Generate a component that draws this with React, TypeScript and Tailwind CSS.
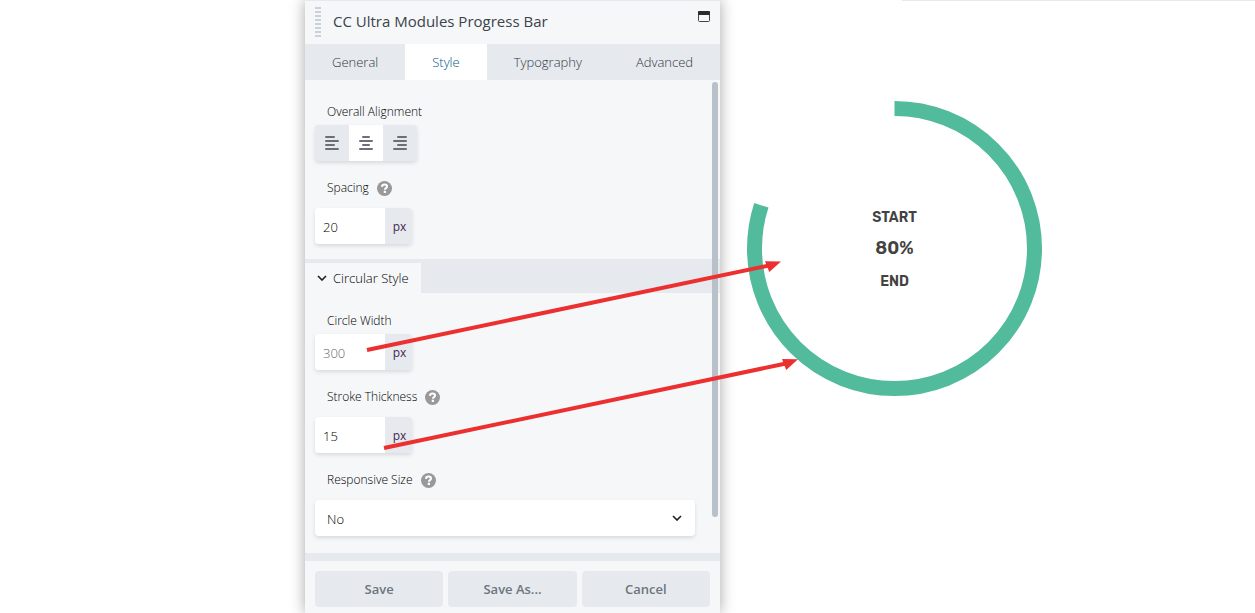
import { useState } from "react";
import type { ReactNode } from "react";
import clsx from "clsx";

const tabs = ["General", "Style", "Typography", "Advanced"];

const alignments = [
  { value: "left", path: "M1 1h8M1 5h12M1 9h8M1 13h12" },
  { value: "center", path: "M4 1h6M1 5h12M4 9h6M1 13h12" },
  { value: "right", path: "M5 1h8M1 5h12M5 9h8M1 13h12" },
];

const actions = ["Save", "Save As...", "Cancel"];

function HelpIcon() {
  return (
    <svg className="w-[15px] h-[15px]" viewBox="0 0 16 16" aria-hidden="true">
      <circle cx="8" cy="8" r="8" fill="#999999" />
      <path
        d="M5.3 6.3C5.4 4.6 6.5 3.8 8.1 3.8c1.5 0 2.6.8 2.6 2.1 0 1.7-2.3 1.7-2.3 3.4"
        fill="none"
        stroke="#ffffff"
        strokeWidth="2.2"
      />
      <rect x="7.2" y="10.4" width="2.4" height="2.4" fill="#ffffff" />
    </svg>
  );
}

function Chevron({ className }: { className?: string }) {
  return (
    <svg className={className} width="10" height="6" viewBox="0 0 10 6" aria-hidden="true">
      <path d="M1 1l4 4 4-4" fill="none" stroke="#1d1d1d" strokeWidth="1.6" />
    </svg>
  );
}

function FieldLabel({ htmlFor, help, children }: { htmlFor: string; help?: boolean; children: ReactNode }) {
  return (
    <div className={clsx("flex items-center gap-2 pl-3", help ? "h-5 mb-2.5" : "h-[18px] mb-1")}>
      <label htmlFor={htmlFor} className="text-[12px] font-light text-black">
        {children}
      </label>
      {help && (
        <button type="button" aria-label="Help">
          <HelpIcon />
        </button>
      )}
    </div>
  );
}

function UnitInput({ id, value, placeholder }: { id: string; value?: string; placeholder?: string }) {
  return (
    <div className="flex w-[97px] h-9 rounded overflow-hidden shadow-[0_2px_4px_rgba(0,0,0,0.12)]">
      <input
        id={id}
        type="text"
        defaultValue={value}
        placeholder={placeholder}
        className="min-w-0 flex-1 bg-white px-2 pt-1 text-[13px] font-light text-black placeholder:text-[#666666] outline-none"
      />
      <span className="w-[27px] pt-0.5 pl-0.5 bg-[#e6eaef] flex items-center justify-center text-[12px] text-[#42264f]">px</span>
    </div>
  );
}

function SettingsPanel() {
  const [tab, setTab] = useState("Style");
  const [align, setAlign] = useState("center");

  return (
    <section className="relative flex flex-col min-h-screen bg-[#f5f7f9] border-t border-[#e6eaef] shadow-[0_0_14px_rgba(0,0,0,0.35)]">
      {/* Title bar */}
      <header className="h-[43px] flex items-center pl-2.5 pr-2.5 pb-0.5">
        <div className="w-1.5 h-[30px] bg-[repeating-linear-gradient(to_bottom,#cbd1d8_0,#cbd1d8_2px,transparent_2px,transparent_4px)]" />
        <h1 className="flex-1 ml-3 text-[15px] text-[#3c434a]">CC Ultra Modules Progress Bar</h1>
        <button type="button" aria-label="Toggle window" className="mb-2.5">
          <svg width="12" height="11" viewBox="0 0 12 11">
            <rect x="0.5" y="0.5" width="11" height="10" rx="1" fill="none" stroke="#444444" />
            <rect x="0" y="0" width="12" height="4" rx="1" fill="#2b2b2b" />
          </svg>
        </button>
      </header>

      {/* Tabs */}
      <nav className="flex h-9 bg-[#e6eaef]">
        {tabs.map((name) => (
          <button
            key={name}
            type="button"
            onClick={() => setTab(name)}
            className={clsx(
              "flex-auto pt-0.5 text-[13px] font-light",
              tab === name ? "bg-white text-[#00588a]" : "text-[#30373e]"
            )}
          >
            {name}
          </button>
        ))}
      </nav>

      {/* Fields */}
      <div className="relative flex-1 pt-[23px]">
        <div className="px-2.5">
          <FieldLabel htmlFor="align-center">Overall Alignment</FieldLabel>
          <div className="inline-flex h-9 rounded overflow-hidden bg-[#e6eaef] shadow-[0_2px_4px_rgba(0,0,0,0.12)] align-top">
            {alignments.map(({ value, path }) => (
              <button
                key={value}
                id={`align-${value}`}
                type="button"
                aria-label={`Align ${value}`}
                onClick={() => setAlign(value)}
                className={clsx("w-[34px] grid place-items-center", align === value && "bg-white")}
              >
                <svg width="14" height="14" viewBox="0 0 14 14">
                  <path d={path} fill="none" stroke="#6b6f78" strokeWidth="2" strokeLinecap="round" />
                </svg>
              </button>
            ))}
          </div>

          <div className="mt-[17px]">
            <FieldLabel htmlFor="spacing" help>Spacing</FieldLabel>
            <UnitInput id="spacing" value="20" />
          </div>
        </div>

        <div className="mt-[15px] pt-1 bg-[#e6eaef]">
          <button
            type="button"
            className="flex items-center gap-1.5 h-[30px] pt-0.5 px-3 bg-[#f5f7f9] text-[13px] font-light text-black"
          >
            <Chevron className="mb-0.5" />
            Circular Style
          </button>
        </div>

        <div className="px-2.5 pt-[19px] pb-[17px]">
          <FieldLabel htmlFor="circle-width">Circle Width</FieldLabel>
          <UnitInput id="circle-width" placeholder="300" />

          <div className="mt-[17px]">
            <FieldLabel htmlFor="stroke" help>Stroke Thickness</FieldLabel>
            <UnitInput id="stroke" value="15" />
          </div>

          <div className="mt-[17px]">
            <FieldLabel htmlFor="responsive" help>Responsive Size</FieldLabel>
            <div className="relative mr-[15px]">
              <select
                id="responsive"
                defaultValue="No"
                className="block w-full h-9 appearance-none rounded bg-white px-3 pt-1 text-[13px] font-light text-black shadow-[0_2px_4px_rgba(0,0,0,0.12)] outline-none"
              >
                <option>No</option>
                <option>Yes</option>
              </select>
              <Chevron className="absolute right-[13px] top-[15px] pointer-events-none" />
            </div>
          </div>
        </div>

        {/* Scroll thumb */}
        <div className="absolute right-0.5 top-0.5 bottom-9 w-1.5 rounded-full bg-[#b8c0ca]" />
      </div>

      {/* Actions */}
      <footer className="grid grid-cols-3 gap-[5px] px-2.5 pt-2.5 pb-1.5 border-t-8 border-[#e6eaef]">
        {actions.map((label) => (
          <button
            key={label}
            type="button"
            className="h-9 pt-0.5 rounded-sm bg-[#e6eaef] text-[13px] font-semibold text-[#6c757d]"
          >
            {label}
          </button>
        ))}
      </footer>

      {/* Callout arrows */}
      <svg
        className="absolute left-0 -top-px z-10 overflow-visible pointer-events-none"
        width="415"
        height="613"
        viewBox="0 0 415 613"
        aria-hidden="true"
      >
        <g stroke="#ec2f2f" strokeWidth="4">
          <path d="M62 350L464 265.5" />
          <path d="M79 448L481 363.5" />
        </g>
        <g fill="#ec2f2f">
          <path d="M460 261.3L476 261.5L464.3 272z" />
          <path d="M477 359L493 359.3L481.2 370z" />
        </g>
      </svg>
    </section>
  );
}

function CircularProgress({ percent }: { percent: number }) {
  return (
    <div className="relative w-full max-w-[295px] aspect-square pt-[3px] flex flex-col items-center justify-center font-['Rubik','Inter',sans-serif] font-semibold text-[#424242]">
      <svg className="absolute inset-0 w-full h-full -rotate-90" viewBox="0 0 295 295" aria-hidden="true">
        <circle
          cx="147.5"
          cy="147.5"
          r="140"
          fill="none"
          stroke="#52bb9c"
          strokeWidth="15"
          pathLength="100"
          strokeDasharray={`${percent} 100`}
        />
      </svg>
      <span className="text-[14px] leading-5">START</span>
      <span className="mt-1.5 text-[18px] leading-7">{percent}%</span>
      <span className="mt-2.5 text-[14px] leading-5">END</span>
    </div>
  );
}

export default function App() {
  return (
    <div className="min-h-screen bg-white grid grid-cols-[305fr_415px_535fr] font-['Segoe_UI','Open_Sans','Noto_Sans',sans-serif]">
      <div />
      <SettingsPanel />
      <main>
        <div className="ml-auto w-[66%] h-px bg-[#e8e8e8]" />
        <div className="pt-[100px] pl-[27px]">
          <CircularProgress percent={80} />
        </div>
      </main>
    </div>
  );
}
